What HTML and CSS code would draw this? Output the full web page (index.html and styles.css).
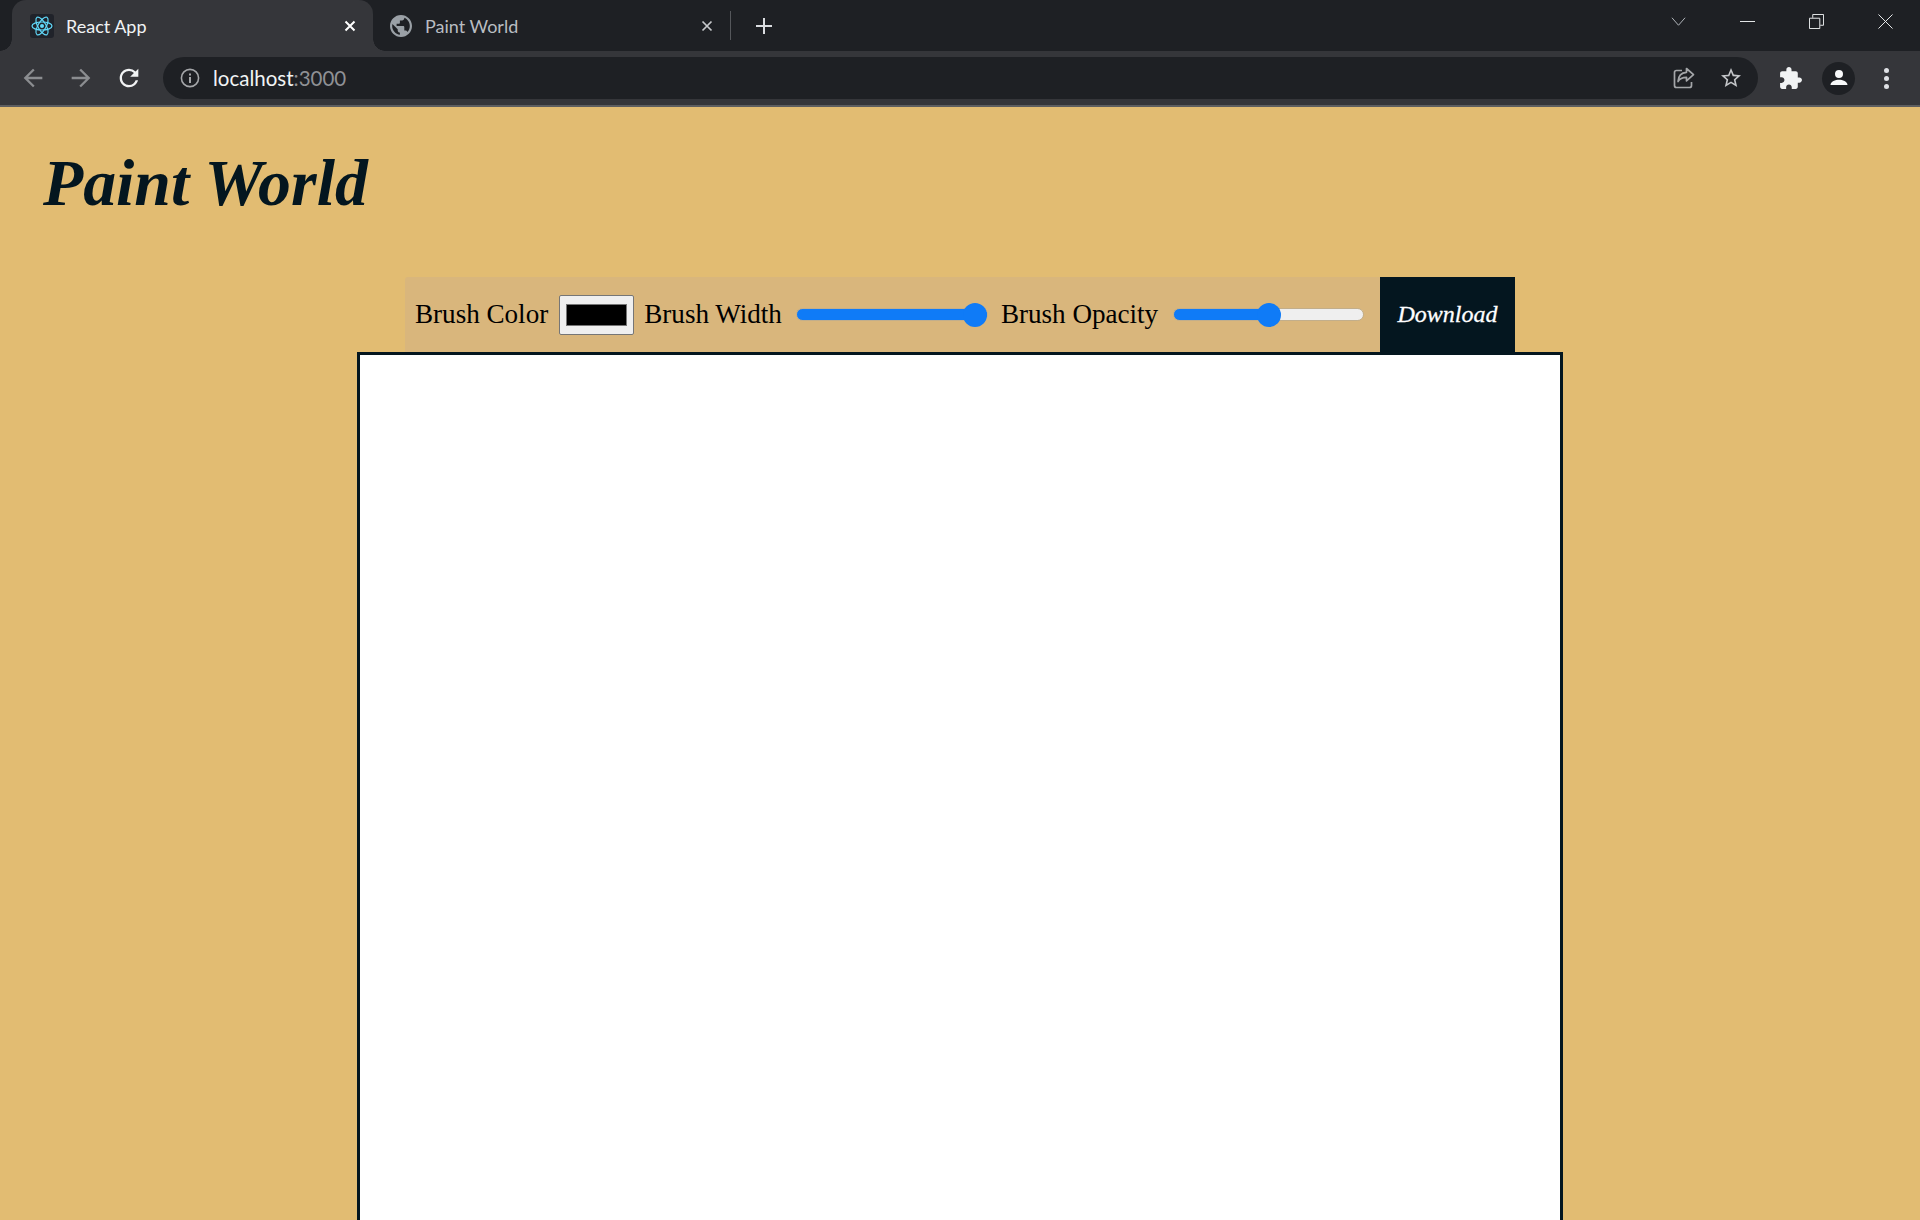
FILE: index.html
```html
<!DOCTYPE html>
<html lang="en">

<head>
    <meta charset="utf-8">
    <meta name="viewport" content="width=device-width, initial-scale=1.0">
    <title>React App</title>
    <link rel="stylesheet" href="styles.css">
</head>

<body>
    <!-- browser chrome -->
    <div class="tabstrip">
        <div class="tab aktiv">
            <svg class="favicon" viewBox="0 0 24 24">
                <rect width="24" height="24" rx="3" fill="#20232a" />
                <g fill="none" stroke="#61dafb" stroke-width="1.2">
                    <ellipse cx="12" cy="12" rx="10" ry="4" />
                    <ellipse cx="12" cy="12" rx="10" ry="4" transform="rotate(60 12 12)" />
                    <ellipse cx="12" cy="12" rx="10" ry="4" transform="rotate(120 12 12)" />
                </g>
                <circle cx="12" cy="12" r="2" fill="#61dafb" />
            </svg>
            <span class="tab-titel">React App</span>
            <svg class="tab-luk" viewBox="0 0 12 12"><path d="M1.5 1.5l9 9M10.5 1.5l-9 9" /></svg>
        </div>
        <div class="tab">
            <svg class="globe" viewBox="2 2 20 20"><path fill="#9aa0a6" d="M12 2C6.48 2 2 6.48 2 12s4.48 10 10 10 10-4.48 10-10S17.52 2 12 2zm-1 17.93c-3.95-.49-7-3.85-7-7.93 0-.62.08-1.21.21-1.79L9 15v1c0 1.1.9 2 2 2v1.93zm6.9-2.54c-.26-.81-1-1.39-1.9-1.39h-1v-3c0-.55-.45-1-1-1H8v-2h2c.55 0 1-.45 1-1V7h2c1.1 0 2-.9 2-2v-.41c2.93 1.19 5 4.06 5 7.41 0 2.08-.8 3.97-2.1 5.39z" /></svg>
            <span class="tab-titel">Paint World</span>
            <svg class="tab-luk" viewBox="0 0 12 12"><path d="M1.5 1.5l9 9M10.5 1.5l-9 9" /></svg>
        </div>
        <div class="tab-streg"></div>
        <svg class="ny-tab" viewBox="0 0 18 18"><path d="M9 1v16M1 9h16" /></svg>
        <div class="vindue-knapper">
            <svg class="vindue-ikon chevron" viewBox="0 0 16 16"><path d="M1 4l7 8 7-8" /></svg>
            <svg class="vindue-ikon" viewBox="0 0 16 16"><path d="M0 8h16" /></svg>
            <svg class="vindue-ikon" viewBox="0 0 16 16"><path d="M.5 4.500h11v11H.5zM4 4V.5h11.500V12H12" /></svg>
            <svg class="vindue-ikon" viewBox="0 0 16 16"><path d="M.5.5l15 15M15.500.5l-15 15" /></svg>
        </div>
    </div>

    <div class="toolbar">
        <svg class="nav-ikon" viewBox="0 0 24 24"><path fill="#8b8d90" d="M20 11H7.830l5.590-5.590L12 4l-8 8 8 8 1.410-1.410L7.830 13H20v-2z" /></svg>
        <svg class="nav-ikon" viewBox="0 0 24 24"><path fill="#8b8d90" d="M4 11h12.170l-5.590-5.590L12 4l8 8-8 8-1.410-1.410L16.170 13H4v-2z" /></svg>
        <svg class="nav-ikon" viewBox="0 0 24 24"><path fill="#f1f3f4" d="M17.65 6.35A7.958 7.958 0 0 0 12 4c-4.42 0-7.99 3.58-7.99 8s3.57 8 7.99 8c3.73 0 6.84-2.55 7.73-6h-2.08A5.99 5.99 0 0 1 12 18c-3.31 0-6-2.69-6-6s2.69-6 6-6c1.66 0 3.14.69 4.22 1.78L13 11h7V4l-2.35 2.35z" /></svg>
        <div class="omnibox">
            <svg class="info" viewBox="0 0 20 20">
                <circle cx="10" cy="10" r="8.6" fill="none" stroke="#a4a6a9" stroke-width="1.6" />
                <path fill="#a4a6a9" d="M9 9h2v6H9zM9 5.4h2v2H9z" />
            </svg>
            <span class="url">localhost<span class="port">:3000</span></span>
            <svg class="del" viewBox="0 0 24 24">
                <path fill="none" stroke="#a4a6a9" stroke-width="1.7" d="M11 4.500H5.500a2 2 0 0 0-2 2v13a2 2 0 0 0 2 2h13a2 2 0 0 0 2-2V16" />
                <path fill="none" stroke="#a4a6a9" stroke-width="1.7" stroke-linejoin="round" d="M15.500 2.500l7 6.200-7 6.200v-3.600c-4 0-6.800 1.200-8.500 4.200 .3-5 3-8.800 8.500-9.200z" />
            </svg>
            <svg class="stjerne" viewBox="0 0 24 24"><path fill="#c4c6c9" d="M22 9.240l-7.190-.62L12 2 9.190 8.630 2 9.240l5.460 4.730L5.820 21 12 17.270 18.180 21l-1.630-7.030L22 9.240zM12 15.400l-3.760 2.270 1-4.280-3.320-2.880 4.380-.38L12 6.100l1.710 4.040 4.380.38-3.320 2.880 1 4.280L12 15.400z" /></svg>
        </div>
        <svg class="puslespil" viewBox="0 0 24 24"><path fill="#f1f3f4" d="M20.500 11H19V7c0-1.100-.9-2-2-2h-4V3.500C13 2.120 11.880 1 10.500 1S8 2.120 8 3.500V5H4c-1.100 0-1.990.9-1.990 2v3.800H3.500c1.490 0 2.700 1.210 2.700 2.700s-1.210 2.700-2.700 2.700H2V20c0 1.100.9 2 2 2h3.800v-1.500c0-1.490 1.210-2.700 2.700-2.700 1.490 0 2.700 1.210 2.700 2.700V22H17c1.100 0 2-.9 2-2v-4h1.500c1.380 0 2.500-1.120 2.500-2.500S21.880 11 20.500 11z" /></svg>
        <div class="profil">
            <svg viewBox="0 0 20 20"><path fill="#f8f9fa" d="M10 2a4 4 0 1 1 0 8 4 4 0 0 1 0-8zM1.500 17c0-3.600 5-5.300 8.500-5.300s8.500 1.700 8.500 5.300z" /></svg>
        </div>
        <div class="prikker"><span></span><span></span><span></span></div>
    </div>

    <!-- selve siden -->
    <main class="side">
        <h1>Paint World</h1>
        <div class="vaerktoej">
            <label class="felt">Brush Color</label>
            <input class="farve" type="color" value="#000000">
            <label class="felt">Brush Width</label>
            <input class="slider bredde" type="range" min="1" max="100" value="100" style="--fyld: 100%">
            <label class="felt">Brush Opacity</label>
            <input class="slider" type="range" min="0" max="100" value="50" style="--fyld: 50%">
            <button class="download">Download</button>
        </div>
        <canvas class="laerred"></canvas>
    </main>
</body>

</html>
```
FILE: styles.css
```css
* {
    margin: 0;
    padding: 0;
    box-sizing: border-box;
}

html,
body {
    height: 100%;
    overflow: hidden;
}

body {
    display: flex;
    flex-direction: column;
    background-color: #e2bc72;
    font-family: Lato, sans-serif;
}

/* browser chrome */
.tabstrip {
    display: flex;
    flex-shrink: 0;
    align-items: center;
    height: 51px;
    padding-left: 12px;
    background-color: #1e2024;
}

.tab {
    position: relative;
    display: flex;
    align-items: center;
    width: 361px;
    height: 51px;
    padding: 0 17px 0 18px;
    color: #b9bdc2;
    font-size: 18px;
}

.tab.aktiv {
    color: #f1f3f4;
    background-color: #35363a;
    border-radius: 14px 14px 0 0;
}

.tab.aktiv::before,
.tab.aktiv::after {
    content: "";
    position: absolute;
    bottom: 0;
    width: 12px;
    height: 12px;
}

.tab.aktiv::before {
    left: -12px;
    background: radial-gradient(circle at 0 0, #1e2024 11.5px, #35363a 12px);
}

.tab.aktiv::after {
    right: -12px;
    background: radial-gradient(circle at 100% 0, #1e2024 11.5px, #35363a 12px);
}

.favicon {
    width: 24px;
    height: 24px;
    margin-right: 12px;
}

.globe {
    width: 22px;
    height: 22px;
    margin-right: 13px;
}

.tab-titel {
    flex: 1;
    white-space: nowrap;
}

.tab-luk {
    width: 12px;
    height: 12px;
    fill: none;
    stroke: #c6c8cb;
    stroke-width: 1.7;
}

.aktiv .tab-luk {
    stroke: #fff;
    stroke-width: 2;
}

.aktiv+.tab {
    width: 357px;
    padding: 0 17px 0 17px;
}

.tab-streg {
    width: 1px;
    height: 29px;
    background-color: #55575b;
}

.ny-tab {
    width: 18px;
    height: 18px;
    margin-left: 24px;
    fill: none;
    stroke: #dadce0;
    stroke-width: 2;
}

.vindue-knapper {
    display: flex;
    align-items: center;
    gap: 54px;
    margin-left: auto;
    margin-right: 27px;
    margin-top: -9px;
}

.vindue-ikon {
    width: 15px;
    height: 15px;
    fill: none;
    stroke: #f1f3f4;
    stroke-width: 1;
}

.chevron {
    stroke: #b9bdc2;
}

.toolbar {
    display: flex;
    flex-shrink: 0;
    align-items: center;
    height: 56px;
    padding-left: 19px;
    background-color: #35363a;
    border-bottom: 2px solid #5d5e60;
}

.nav-ikon {
    width: 28px;
    height: 28px;
    margin-right: 20px;
}

.omnibox {
    display: flex;
    align-items: center;
    width: 1595px;
    height: 42px;
    padding-left: 17px;
    background-color: #1e2024;
    border-radius: 21px;
}

.info {
    width: 20px;
    height: 20px;
    margin-right: 13px;
}

.url {
    flex: 1;
    color: #f1f3f4;
    font-size: 20.500px;
}

.port {
    color: #8f9195;
}

.del {
    width: 24px;
    height: 24px;
    margin-right: 24px;
}

.stjerne {
    width: 24px;
    height: 24px;
    margin-right: 15px;
}

.puslespil {
    width: 25px;
    height: 25px;
    margin-left: 20px;
}

.profil {
    display: flex;
    align-items: center;
    justify-content: center;
    width: 33px;
    height: 33px;
    margin-left: 19px;
    background-color: #1e2024;
    border-radius: 50%;
}

.profil svg {
    width: 20px;
    height: 20px;
}

.prikker {
    display: flex;
    flex-direction: column;
    gap: 3px;
    margin-left: 29px;
}

.prikker span {
    width: 5px;
    height: 5px;
    background-color: #dfe1e5;
    border-radius: 50%;
}

/* selve siden */
.side {
    display: flex;
    flex-direction: column;
    align-items: center;
    flex: 1;
    min-height: 0;
    overflow: hidden;
}

h1 {
    flex-shrink: 0;
    align-self: flex-start;
    height: 170px;
    padding: 37px 0 0 43px;
    color: #04161f;
    font-family: "Liberation Serif", serif;
    font-size: 65.800px;
    font-style: italic;
    font-weight: bold;
    line-height: 1.2;
}

.vaerktoej {
    display: flex;
    align-items: center;
    flex-shrink: 0;
    width: 1110px;
    height: 75px;
    padding-left: 10px;
    background-color: #d9b67c;
    border-top-left-radius: 3px;
}

.felt {
    color: #000;
    font-family: "Liberation Serif", serif;
    font-size: 27.100px;
    white-space: nowrap;
}

.farve {
    flex-shrink: 0;
    width: 75px;
    height: 40px;
    margin: 0 10px 0 11px;
    padding: 0;
    background-color: #efefef;
    border: 1px solid #767676;
    border-radius: 2px;
    -webkit-appearance: none;
    appearance: none;
}

.farve::-webkit-color-swatch-wrapper {
    padding: 8px 6px;
}

.farve::-webkit-color-swatch {
    border: 1px solid #767676;
}

.slider {
    flex-shrink: 0;
    width: 191px;
    height: 24px;
    margin: 0 15px;
    background: transparent;
    -webkit-appearance: none;
    appearance: none;
}

.slider.bredde {
    width: 192px;
    margin: 0 13px 0 14px;
}

.slider::-webkit-slider-runnable-track {
    height: 13px;
    background: linear-gradient(to right, #0f7bf7 var(--fyld), #efefef var(--fyld));
    border: 1px solid #c2ae8b;
    border-radius: 7px;
}

.slider::-webkit-slider-thumb {
    width: 24px;
    height: 24px;
    margin-top: -6.500px;
    background-color: #0f7bf7;
    border-radius: 50%;
    -webkit-appearance: none;
}

.download {
    flex-shrink: 0;
    width: 135px;
    height: 75px;
    margin-left: auto;
    color: #fff;
    background-color: #04161f;
    border: none;
    font-family: "Liberation Serif", serif;
    font-size: 24px;
    font-style: italic;
    -webkit-text-stroke: 0.3px #fff;
}

.laerred {
    display: block;
    flex-shrink: 0;
    width: 1206px;
    height: 1000px;
    background-color: #fff;
    border: 3px solid #04161f;
}
```
